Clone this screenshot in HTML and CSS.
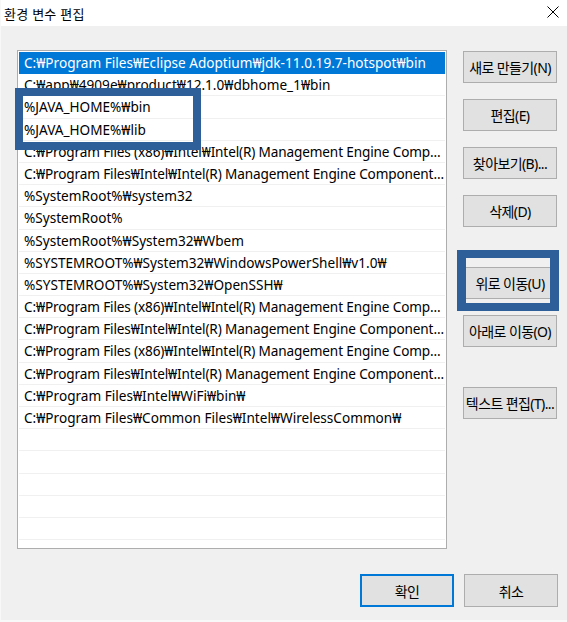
FILE: index.html
```html
<!DOCTYPE html>
<html lang="ko">
<head>
<meta charset="utf-8">
<link rel="stylesheet" href="styles.css">
</head>
<body>
<div class="window">
  <div class="titlebar">
    <span class="title">환경 변수 편집</span>
    <svg class="close" width="12" height="12" viewBox="0 0 12 12"><path d="M0.5 0.5L11.5 11.5M11.5 0.5L0.5 11.5" stroke="#000" stroke-width="1" fill="none"/></svg>
  </div>
  <div class="content">
    <div class="list">
      <div class="row selected">C:₩Program Files₩Eclipse Adoptium₩jdk-11.0.19.7-hotspot₩bin</div>
      <div class="row">C:₩app₩4909e₩product₩12.1.0₩dbhome_1₩bin</div>
      <div class="row">%JAVA_HOME%₩bin</div>
      <div class="row">%JAVA_HOME%₩lib</div>
      <div class="row long">C:₩Program Files (x86)₩Intel₩Intel(R) Management Engine Comp...</div>
      <div class="row long">C:₩Program Files₩Intel₩Intel(R) Management Engine Component...</div>
      <div class="row">%SystemRoot%₩system32</div>
      <div class="row">%SystemRoot%</div>
      <div class="row">%SystemRoot%₩System32₩Wbem</div>
      <div class="row">%SYSTEMROOT%₩System32₩WindowsPowerShell₩v1.0₩</div>
      <div class="row">%SYSTEMROOT%₩System32₩OpenSSH₩</div>
      <div class="row long">C:₩Program Files (x86)₩Intel₩Intel(R) Management Engine Comp...</div>
      <div class="row long">C:₩Program Files₩Intel₩Intel(R) Management Engine Component...</div>
      <div class="row long">C:₩Program Files (x86)₩Intel₩Intel(R) Management Engine Comp...</div>
      <div class="row long">C:₩Program Files₩Intel₩Intel(R) Management Engine Component...</div>
      <div class="row">C:₩Program Files₩Intel₩WiFi₩bin₩</div>
      <div class="row">C:₩Program Files₩Common Files₩Intel₩WirelessCommon₩</div>
      <div class="row"></div>
      <div class="row"></div>
      <div class="row"></div>
      <div class="row"></div>
      <div class="row"></div>
      <div class="row"></div>
    </div>
    <div class="side">
      <button class="btn">새로 만들기(N)</button>
      <button class="btn">편집(E)</button>
      <button class="btn">찾아보기(B)...</button>
      <button class="btn">삭제(D)</button>
      <button class="btn spaced">위로 이동(U)</button>
      <button class="btn">아래로 이동(O)</button>
      <button class="btn spaced">텍스트 편집(T)...</button>
    </div>
  </div>
  <div class="footer">
    <button class="btn primary">확인</button>
    <button class="btn">취소</button>
  </div>
  <div class="mark mark-list"></div>
  <div class="mark mark-btn"></div>
</div>
</body>
</html>
```
FILE: styles.css
```css
* { box-sizing: border-box; }
html, body { margin: 0; padding: 0; }
body { background: #f0f0f0; }
.window {
  position: relative;
  width: 567px;
  height: 622px;
  background: #f0f0f0;
  border-left: 1px solid #f8f8f8;
  border-bottom: 2px solid #f8f8f8;
  overflow: hidden;
  font-family: "Noto Sans", "Noto Sans CJK KR", sans-serif;
  color: #000;
}
.titlebar {
  height: 26px;
  background: #fff;
  display: flex;
  align-items: center;
  justify-content: space-between;
  padding: 0 8px 0 3px;
}
.title {
  font-family: "Noto Sans CJK KR", sans-serif;
  font-size: 13px;
  letter-spacing: 0.2px;
}
.close { display: block; margin-top: -2px; }
.content {
  display: grid;
  grid-template-columns: 430px 94px;
  column-gap: 16px;
  padding: 24px 0 0 16px;
}
.list {
  height: 499px;
  background: #fff;
  border: 1px solid #adadad;
  padding: 1px;
  overflow: hidden;
}
.row {
  height: 22.2px;
  line-height: 21px;
  border-bottom: 1px solid #f0f0f0;
  padding-left: 5px;
  font-size: 13.6px;
  white-space: nowrap;
  overflow: hidden;
}
.row.long { letter-spacing: -0.14px; }
.row.selected {
  background: #0078d7;
  color: #fff;
  border-bottom-color: #0078d7;
}
.side {
  display: flex;
  flex-direction: column;
  gap: 16px;
  padding-top: 1px;
}
.btn {
  width: 94px;
  height: 32px;
  margin: 0;
  padding: 0;
  background: #e1e1e1;
  border: 1px solid #adadad;
  font-family: "Noto Sans", "Noto Sans CJK KR", sans-serif;
  font-size: 14px;
  letter-spacing: -0.6px;
  color: #000;
  white-space: nowrap;
}
.btn.spaced { margin-top: 24px; }
.btn.primary { border: 2px solid #0078d7; }
.footer {
  display: flex;
  justify-content: flex-end;
  gap: 10px;
  padding: 25px 9px 0 0;
}
.footer .btn { height: 33px; }
.mark {
  position: absolute;
  border: 8px solid #2e5f99;
}
.mark-list { left: 14px; top: 88px; width: 186px; height: 62px; }
.mark-btn { left: 456px; top: 250px; width: 102px; height: 61px; border-width: 8px 9px; }
```
